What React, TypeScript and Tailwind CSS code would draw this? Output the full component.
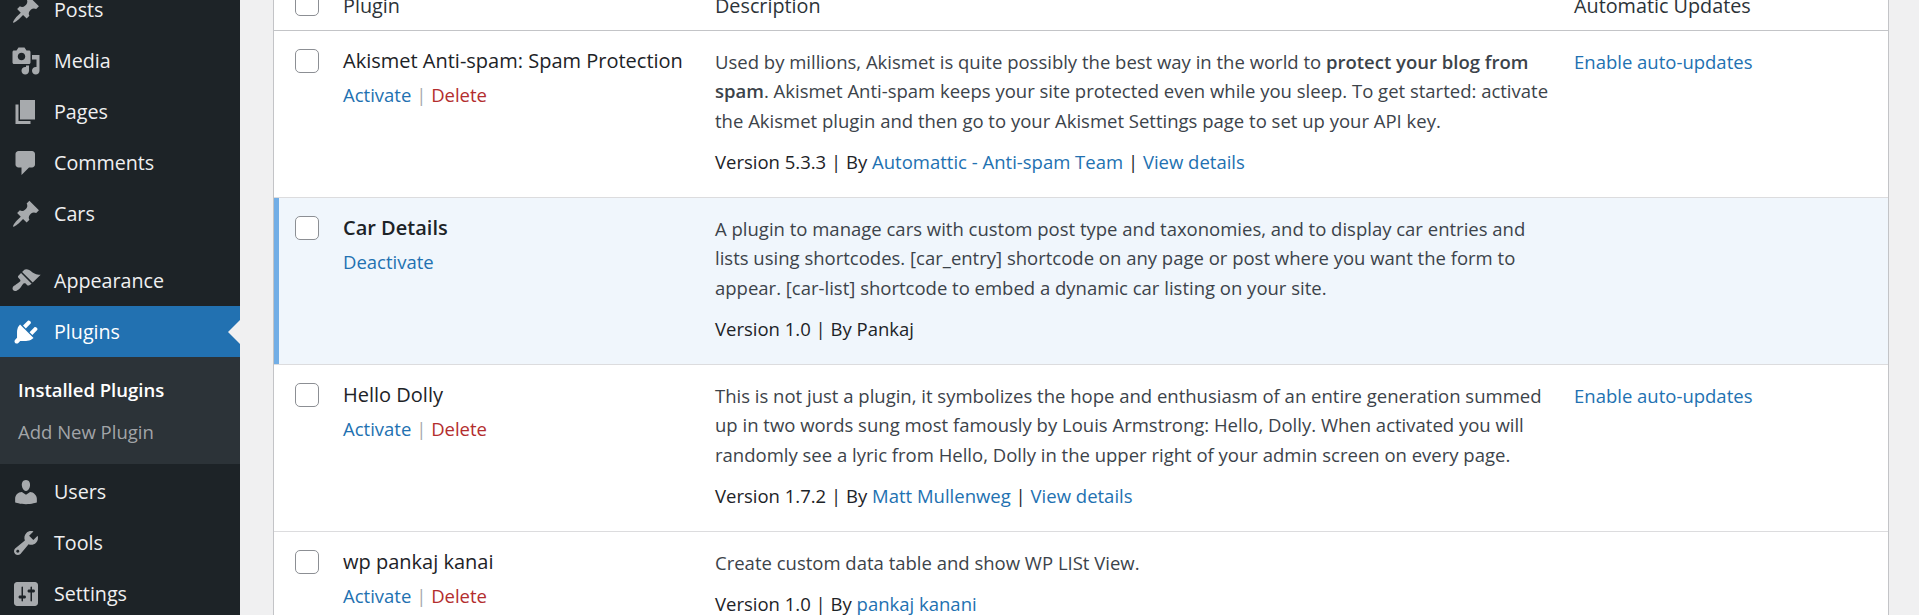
const F = "[font-family:'Open_Sans','Noto_Sans',sans-serif]";
const icons: Record<string, string> = {
  post: "M10.44 3.02l1.82-1.82 6.36 6.35-1.83 1.82c-1.05-.68-2.48-.57-3.41.36l-.75.75c-.92.93-1.04 2.35-.35 3.41l-1.83 1.82-2.41-2.41-2.8 2.79c-.42.42-3.38 2.71-3.8 2.29s1.86-3.39 2.28-3.81l2.79-2.79L4.1 9.36l1.83-1.82c1.05.69 2.48.57 3.4-.36l.75-.75c.93-.92 1.05-2.35.36-3.41z",
  media: "M13 11V4c0-.55-.45-1-1-1h-1.67L9 1H5L3.67 3H2c-.55 0-1 .45-1 1v7c0 .55.45 1 1 1h10c.55 0 1-.45 1-1zM7 4.5c1.38 0 2.5 1.12 2.5 2.5S8.38 9.5 7 9.5 4.5 8.38 4.5 7 5.62 4.5 7 4.5zM14 6h5v10.5c0 1.38-1.12 2.5-2.5 2.5S14 17.88 14 16.5s1.12-2.5 2.5-2.5c.17 0 .34.02.5.05V9h-3V6zm-4 8.05V13h2v3.5c0 1.38-1.12 2.5-2.5 2.5S7 17.88 7 16.5 8.12 14 9.5 14c.17 0 .34.02.5.05z",
  page: "M6 15V2h10v13H6zm-1 1h8v2H3V5h2v11z",
  comments: "M5 2h9c1.1 0 2 .9 2 2v7c0 1.1-.9 2-2 2h-2l-5 5v-5H5c-1.1 0-2-.9-2-2V4c0-1.1.9-2 2-2z",
  appearance: "M14.48 11.06L7.41 3.99l1.5-1.5c.5-.56 2.3-.47 3.51.32 1.21.8 1.43 1.28 2.91 2.1 1.18.64 2.45 1.26 4.45.85zm-.71.71L6.7 4.7 4.93 6.47c-.39.39-.39 1.02 0 1.41l1.06 1.06c.39.39.39 1.03 0 1.42-.6.6-1.43 1.11-2.21 1.69-.35.26-.7.53-1.01.84C1.43 13.23.4 15.1 1.5 16.2c1.1 1.1 2.97.07 4.31-1.27.31-.31.58-.66.84-1.01.58-.78 1.09-1.61 1.69-2.21.39-.39 1.02-.39 1.41 0l1.06 1.06c.39.39 1.02.39 1.41 0z",
  plugins: "M13.11 4.36L9.87 7.6 8 5.73l3.24-3.24c.35-.34 1.05-.2 1.56.32.52.51.66 1.21.31 1.55zm-8 1.77l.91-1.12 9.01 9.01-1.19.84c-.71.71-2.63 1.16-3.82 1.16H6.14L4.9 17.26c-.59.59-1.54.59-2.12 0-.59-.58-.59-1.53 0-2.12l1.24-1.24v-3.88c0-1.13.4-3.19 1.09-3.89zm7.26 3.97l3.24-3.24c.34-.35 1.04-.21 1.55.31.52.51.66 1.21.31 1.55l-3.24 3.25z",
  users: "M10 9.25c-2.27 0-2.73-3.44-2.73-3.44C7 4.02 7.82 2 9.97 2c2.16 0 2.98 2.02 2.71 3.81 0 0-.41 3.44-2.68 3.44zm0 2.57L12.72 10c2.39 0 4.52 2.33 4.52 4.53v2.49s-3.65 1.13-7.24 1.13c-3.65 0-7.24-1.13-7.24-1.13v-2.49c0-2.25 1.94-4.48 4.47-4.48z",
  tools: "M16.68 9.77c-1.34 1.34-3.3 1.67-4.95.99l-5.41 6.52c-.99.99-2.59.99-3.58 0s-.99-2.59 0-3.57l6.52-5.42c-.68-1.65-.35-3.61.99-4.95 1.28-1.28 3.12-1.62 4.72-1.06l-2.89 2.89 2.82 2.82 2.86-2.87c.53 1.58.18 3.39-1.08 4.65zM3.81 16.21c.4.39 1.04.39 1.43 0 .4-.4.4-1.04 0-1.43-.39-.4-1.03-.4-1.43 0-.39.39-.39 1.03 0 1.43z",
  settings: "M18 16V4c0-1.1-.9-2-2-2H4c-1.1 0-2 .9-2 2v12c0 1.1.9 2 2 2h12c1.1 0 2-.9 2-2zM8 11h1c.55 0 1 .45 1 1s-.45 1-1 1H8v1.5c0 .28-.22.5-.5.5s-.5-.22-.5-.5V13H6c-.55 0-1-.45-1-1s.45-1 1-1h1V5.5c0-.28.22-.5.5-.5s.5.22.5.5V11zm5-2h-1c-.55 0-1-.45-1-1s.45-1 1-1h1V5.5c0-.28.22-.5.5-.5s.5.22.5.5V7h1c.55 0 1 .45 1 1s-.45 1-1 1h-1v5.5c0 .28-.22.5-.5.5s-.5-.22-.5-.5V9z",
};
function Icon({ d, white }: { d: string; white?: boolean }) {
  return (
    <svg viewBox="0 0 20 20" className={`w-[30px] h-[30px] shrink-0 ${white ? "fill-white" : "fill-[#a7aaad]"}`}>
      <path d={d} fillRule="evenodd" />
    </svg>
  );
}
function Item({ icon, label }: { icon: string; label: string }) {
  return (
    <div className="h-[51px] flex items-center pl-[11px] gap-[13px] text-[19.7px] text-[#f0f0f1]">
      <Icon d={icons[icon]} />
      <span>{label}</span>
    </div>
  );
}
function Sidebar() {
  return (
    <div className="w-[240px] shrink-0 bg-[#1d2327] -mt-[16px] h-[640px]">
      <Item icon="post" label="Posts" />
      <Item icon="media" label="Media" />
      <Item icon="page" label="Pages" />
      <Item icon="comments" label="Comments" />
      <Item icon="post" label="Cars" />
      <div className="h-[16px]" />
      <Item icon="appearance" label="Appearance" />
      <div className="relative h-[51px] flex items-center pl-[11px] gap-[13px] text-[19.7px] text-white bg-[#2271b1]">
        <Icon d={icons.plugins} white />
        <span>Plugins</span>
        <div className="absolute right-0 top-[14px] border-y-[12px] border-r-[12px] border-y-transparent border-r-[#f0f0f1]" />
      </div>
      <div className="bg-[#2c3338] h-[107px] pt-[12px] pl-[18px] text-[18.5px]">
        <div className="h-[42px] flex items-center font-semibold text-white">Installed Plugins</div>
        <div className="h-[42px] flex items-center text-[#c3c4c7cc]">Add New Plugin</div>
      </div>
      <div className="h-[2px]" />
      <Item icon="users" label="Users" />
      <Item icon="tools" label="Tools" />
      <Item icon="settings" label="Settings" />
    </div>
  );
}
function Check() {
  return <div className="w-[24px] h-[24px] rounded-[5px] border border-[#8c8f94] bg-white" />;
}
const A = ({ children }: { children: React.ReactNode }) => <span className="text-[#2271b1]">{children}</span>;
const Sep = () => <span className="text-[#1d2327]">|</span>;
function Row({ name, active, actions, desc, meta, auto, h }: any) {
  return (
    <div className={`flex ${active ? "bg-[#f0f6fc]" : "bg-white"} border-b border-[#dcdcde]`} style={{ height: h }}>
      <div className={`w-[69px] shrink-0 pl-[16px] pt-[18px] border-l-[5px] ${active ? "border-l-[#72aee6]" : "border-l-transparent"}`}>
        <Check />
      </div>
      <div className="w-[372px] shrink-0 pt-[15px]">
        <div className={`text-[#1d2327] h-[35px] leading-[30px] text-[20px] ${active ? "font-semibold" : ""}`}>{name}</div>
        <div className="text-[18.5px] leading-[28px]">{actions}</div>
      </div>
      <div className="w-[859px] pr-[20px] shrink-0 pt-[16px] text-[18.5px] leading-[29.25px] text-[#3c434a]">
        <div>{desc}</div>
        <div className="mt-[12px] text-[#1d2327]">{meta}</div>
      </div>
      <div className="pt-[16px] text-[18.5px] leading-[29.25px]">{auto && <A>Enable auto-updates</A>}</div>
    </div>
  );
}
const Del = () => <span className="text-[#b32d2e]">Delete</span>;
const acts = (
  <>
    <A>Activate</A> <span className="text-[#a7aaad]">|</span> <Del />
  </>
);
export default function App() {
  return (
    <div className={`h-[615px] w-[1919px] overflow-hidden flex bg-[#f0f0f1] ${F}`}>
      <Sidebar />
      <div className="ml-[33px] w-[1616px] shrink-0 border-x border-[#c3c4c7] bg-white self-start">
        <div className="flex h-[31px] border-b border-[#c3c4c7] text-[19.8px] text-[#2c3338] leading-[28px]">
          <div className="w-[69px] shrink-0 pl-[21px] -mt-[8px]"><Check /></div>
          <div className="w-[372px] shrink-0 -mt-[8px]">Plugin</div>
          <div className="w-[859px] shrink-0 -mt-[8px]">Description</div>
          <div className="-mt-[8px]">Automatic Updates</div>
        </div>
        <Row
          h={167}
          name="Akismet Anti-spam: Spam Protection"
          actions={acts}
          auto
          desc={<>Used by millions, Akismet is quite possibly the best way in the world to <b className="font-semibold">protect your blog from spam</b>. Akismet Anti-spam keeps your site protected even while you sleep. To get started: activate the Akismet plugin and then go to your Akismet Settings page to set up your API key.</>}
          meta={<>Version 5.3.3 <Sep /> By <A>Automattic - Anti-spam Team</A> <Sep /> <A>View details</A></>}
        />
        <Row
          h={167}
          active
          name="Car Details"
          actions={<A>Deactivate</A>}
          desc="A plugin to manage cars with custom post type and taxonomies, and to display car entries and lists using shortcodes. [car_entry] shortcode on any page or post where you want the form to appear. [car-list] shortcode to embed a dynamic car listing on your site."
          meta={<>Version 1.0 <Sep /> By Pankaj</>}
        />
        <Row
          h={167}
          name="Hello Dolly"
          actions={acts}
          auto
          desc="This is not just a plugin, it symbolizes the hope and enthusiasm of an entire generation summed up in two words sung most famously by Louis Armstrong: Hello, Dolly. When activated you will randomly see a lyric from Hello, Dolly in the upper right of your admin screen on every page."
          meta={<>Version 1.7.2 <Sep /> By <A>Matt Mullenweg</A> <Sep /> <A>View details</A></>}
        />
        <Row
          h={120}
          name="wp pankaj kanai"
          actions={acts}
          desc="Create custom data table and show WP LISt View."
          meta={<>Version 1.0 <Sep /> By <A>pankaj kanani</A></>}
        />
      </div>
    </div>
  );
}
